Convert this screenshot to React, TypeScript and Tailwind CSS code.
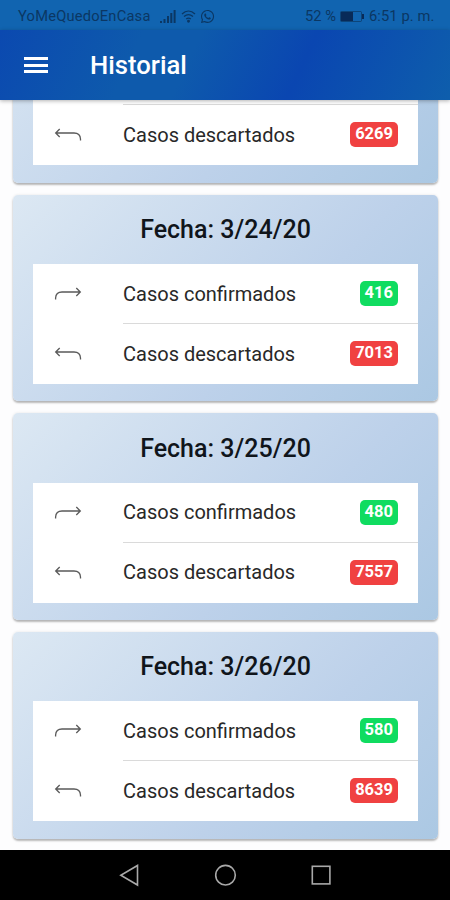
import { FaWhatsapp } from "react-icons/fa";

interface Day {
  date?: string;
  confirmed?: number;
  discarded: number;
}

// The first day is scrolled under the header, only its last row shows
const days: Day[] = [
  { discarded: 6269 },
  { date: "3/24/20", confirmed: 416, discarded: 7013 },
  { date: "3/25/20", confirmed: 480, discarded: 7557 },
  { date: "3/26/20", confirmed: 580, discarded: 8639 },
];

function RedoIcon() {
  return (
    <svg width="28" height="16" viewBox="0 0 28 16" fill="none" stroke="#5a5a5a" strokeWidth="1.3">
      <path d="M1.6 13.5V12C1.8 8 4.3 6 8 6H26.3M22.3 2L26.3 6L22.3 10" />
    </svg>
  );
}

function UndoIcon() {
  return (
    <svg width="28" height="16" viewBox="0 0 28 16" fill="none" stroke="#5a5a5a" strokeWidth="1.3">
      <path d="M26.5 13.5V12C26.3 8 23.8 6 20 6H1.7M5.7 2L1.7 6L5.7 10" />
    </svg>
  );
}

function StatusBar() {
  return (
    <div className="flex h-[30px] shrink-0 items-center justify-between bg-[#1164b0] pt-[3px] pr-[15px] pl-[18px] text-[14.7px] text-[#0b3763]">
      <div className="flex items-center">
        <span className="w-[133px] whitespace-nowrap tracking-[0.2px]">YoMeQuedoEnCasa</span>
        <svg className="ml-[9px]" width="16" height="13" viewBox="0 0 16 13" fill="currentColor">
          <path d="M0 11h2v2H0zM3.5 9h2v4h-2zM7 6h2v7H7zM10.3 3h2v10h-2zM13.6 0h2v13h-2z" />
        </svg>
        <svg className="ml-[5px]" width="15" height="13" viewBox="0 0 15 13" fill="none" stroke="currentColor" strokeWidth="1.3">
          <path d="M1 4C5 .2 10 .2 14 4M3 6.6c3-2.6 6-2.6 9 0M5.2 9c1.6-1.2 3-1.2 4.6 0" />
          <circle cx="7.5" cy="11.3" r="0.8" fill="currentColor" />
        </svg>
        <FaWhatsapp className="ml-1 h-[15px] w-[15px]" />
      </div>
      <div className="flex items-center">
        <span className="w-[31px] whitespace-nowrap">52 %</span>
        <svg className="ml-1" width="25" height="11" viewBox="0 0 25 11">
          <rect x="0.5" y="0.5" width="21" height="10" rx="1" fill="none" stroke="currentColor" strokeOpacity="0.7" />
          <path d="M1 1h12v9H1zM22 3h2v5h-2z" fill="#082a58" />
        </svg>
        <span className="ml-1 w-[66px] whitespace-nowrap tracking-[0.1px]">6:51 p. m.</span>
      </div>
    </div>
  );
}

function Header() {
  return (
    <header className="z-10 flex h-[70px] shrink-0 items-center bg-[linear-gradient(115deg,#0b49b0_0%,#0e5aac_30%,#0e5aac_42%,#0a46b1_66%,#0e5eac_100%)] pl-6 text-white shadow-[0_1px_4px_rgba(0,0,0,0.3)]">
      <div className="flex w-[23.5px] flex-col gap-[3.5px]">
        <span className="h-[3px] bg-white" />
        <span className="h-[3px] bg-white" />
        <span className="h-[3px] bg-white" />
      </div>
      <h1 className="ml-[42.5px] text-[25.7px] leading-8 font-medium">Historial</h1>
    </header>
  );
}

function DayCard({ date, confirmed, discarded }: Day) {
  return (
    <section className="flex h-[206.7px] shrink-0 flex-col rounded-[5px] bg-[linear-gradient(135deg,#dce8f3_0%,#bdd1ea_62%,#abc8e3_100%)] px-5 shadow-[0_2px_2px_rgba(0,0,0,0.26),0_0_3px_rgba(0,0,0,0.1)]">
      <h2 className="flex h-[69.5px] items-center justify-center pt-px text-[25px] font-medium text-[#10151b]">
        {date && `Fecha: ${date}`}
      </h2>
      <div className="bg-white">
        <div className="flex h-[60px] pl-[21px]">
          <div className="flex w-[69px] items-center">
            <RedoIcon />
          </div>
          <div className="flex flex-1 items-center justify-between border-b border-[#dadada] pr-5">
            {confirmed !== undefined && (
              <>
                <span className="text-[20px] text-[#282828]">Casos confirmados</span>
                <span className="rounded-[5px] bg-[#10dc60] px-[5px] pt-[3px] pb-[5px] text-[16.5px] leading-[17px] font-bold text-white">
                  {confirmed}
                </span>
              </>
            )}
          </div>
        </div>
        <div className="flex h-[60px] pl-[21px]">
          <div className="flex w-[69px] items-center">
            <UndoIcon />
          </div>
          <div className="flex flex-1 items-center justify-between pr-5 pb-px">
            <span className="text-[20px] text-[#282828]">Casos descartados</span>
            <span className="rounded-[5px] bg-[#f04141] px-[5px] pt-[3px] pb-[5px] text-[16.5px] leading-[17px] font-bold text-white">
              {discarded}
            </span>
          </div>
        </div>
      </div>
    </section>
  );
}

function NavBar() {
  return (
    <nav className="flex h-[50px] shrink-0 items-center justify-center bg-black">
      <svg width="450" height="50" viewBox="0 0 450 50" fill="none" stroke="#a9a9a9" strokeWidth="1.6">
        <path d="M137.5 15.5V35L120.8 25.2Z" />
        <circle cx="225.5" cy="25.2" r="9.8" />
        <rect x="312.3" y="16.3" width="17.6" height="17.6" />
      </svg>
    </nav>
  );
}

export default function App() {
  return (
    <div className="flex h-[900px] w-[450px] flex-col overflow-hidden bg-white font-['Roboto',sans-serif]">
      <StatusBar />
      <Header />
      <main className="flex min-h-0 flex-1 flex-col justify-end gap-3 overflow-hidden bg-[#fdfdfe] pr-3 pb-[11.4px] pl-[13px]">
        {days.map((day) => (
          <DayCard key={day.discarded} {...day} />
        ))}
      </main>
      <NavBar />
    </div>
  );
}
